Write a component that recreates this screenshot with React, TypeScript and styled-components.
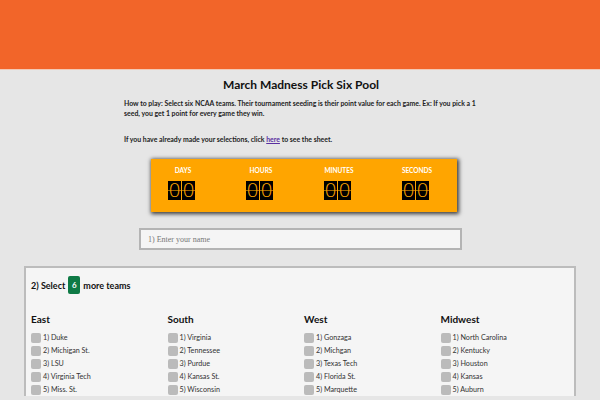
import styled, { createGlobalStyle } from "styled-components";

const GlobalStyle = createGlobalStyle`
  body {
    margin: 0;
    background-color: #e6e6e6;
    font-family: "Lato", "Liberation Sans", sans-serif;
    color: #111;
  }
`;

const Header = styled.div`
  height: 69px;
  background-color: #f26529;
  border-bottom: 1px solid #f3c9b4;
`;

const Content = styled.div`
  width: 354px;
  margin: 0 auto;
  padding-left: 2px;
`;

const Title = styled.h1`
  margin: 5px 0 0;
  font-size: 12px;
  text-align: center;
  line-height: 20px;
`;

const Intro = styled.p<{ $top: number }>`
  margin: ${(p) => p.$top}px 0 0;
  font-size: 6.9px;
  font-weight: bold;
  line-height: 10px;
  color: #222;
  a {
    color: #5a2fa0;
  }
`;

const Countdown = styled.div`
  width: 306px;
  height: 53px;
  margin: 15px 0 0 27px;
  background-color: #ffa500;
  box-shadow: 1px 1px 4px 1px rgba(0, 0, 0, 0.75);
  display: flex;
  justify-content: center;
  padding-right: 8px;
  box-sizing: border-box;
`;

const Unit = styled.div`
  flex: none;
  width: 78px;
  display: flex;
  flex-direction: column;
  align-items: center;
  padding-top: 8px;
`;

const UnitLabel = styled.div`
  font-size: 6.5px;
  font-weight: bold;
  color: #fff;
  line-height: 8px;
`;

const Digits = styled.div`
  display: flex;
  gap: 1px;
  margin-top: 6px;
  margin-right: 3px;
`;

const Digit = styled.span`
  position: relative;
  width: 13px;
  height: 19px;
  background-color: #000;
  color: #ffa500;
  font-size: 20px;
  line-height: 19px;
  text-align: center;
  font-family: "DejaVu Sans", sans-serif;
  font-weight: 300;
  &::after {
    content: "";
    position: absolute;
    left: -1px;
    right: -1px;
    top: 9px;
    height: 1px;
    background-color: rgba(255, 165, 0, 0.6);
  }
`;

const NameInput = styled.input`
  display: block;
  width: 323px;
  height: 22px;
  margin: 16px 0 0 15px;
  box-sizing: border-box;
  background-color: #f5f5f5;
  border: 2px solid #b4b4b4;
  padding: 0 0 0 7px;
  font-family: "Liberation Serif", serif;
  font-size: 8px;
  outline: none;
  &::placeholder {
    color: #777;
  }
`;

const Panel = styled.div`
  width: 552px;
  margin: 16px auto 0;
  box-sizing: border-box;
  background-color: #f5f5f5;
  border: 2px solid #bcbcbc;
  border-bottom: none;
  padding: 7px 5px 0;
`;

const SelectLine = styled.div`
  display: flex;
  align-items: center;
  gap: 3px;
  font-size: 9px;
  font-weight: bold;
  height: 20px;
`;

const Badge = styled.span`
  display: inline-flex;
  align-items: center;
  justify-content: center;
  width: 12px;
  height: 18px;
  border-radius: 2px;
  background-color: #0e7a45;
  color: #fff;
  font-size: 8px;
`;

const Regions = styled.div`
  display: grid;
  grid-template-columns: repeat(4, 136.5px);
  margin-top: 17px;
`;

const RegionTitle = styled.h2`
  margin: 0 0 5px;
  font-size: 10px;
  line-height: 14px;
`;

const Team = styled.label`
  display: flex;
  align-items: center;
  gap: 2px;
  height: 13px;
  font-size: 7.2px;
  color: #333;
`;

const Box = styled.span`
  width: 10px;
  height: 10px;
  border-radius: 2px;
  background-color: #bbb;
`;

const regions = [
  { name: "East", teams: ["Duke", "Michigan St.", "LSU", "Virginia Tech", "Miss. St."] },
  { name: "South", teams: ["Virginia", "Tennessee", "Purdue", "Kansas St.", "Wisconsin"] },
  { name: "West", teams: ["Gonzaga", "Michgan", "Texas Tech", "Florida St.", "Marquette"] },
  { name: "Midwest", teams: ["North Carolina", "Kentucky", "Houston", "Kansas", "Auburn"] },
];

const units = ["DAYS", "HOURS", "MINUTES", "SECONDS"];

export default function App() {
  return (
    <>
      <GlobalStyle />
      <Header />
      <Content>
        <Title>March Madness Pick Six Pool</Title>
        <Intro $top={3}>
          How to play: Select six NCAA teams. Their tournament seeding is their
          point value for each game. Ex: If you pick a 1 seed, you get 1 point
          for every game they win.
        </Intro>
        <Intro $top={16}>
          If you have already made your selections, click <a href="#">here</a>{" "}
          to see the sheet.
        </Intro>
        <Countdown>
          {units.map((u) => (
            <Unit key={u}>
              <UnitLabel>{u}</UnitLabel>
              <Digits>
                <Digit>0</Digit>
                <Digit>0</Digit>
              </Digits>
            </Unit>
          ))}
        </Countdown>
        <NameInput placeholder="1) Enter your name" />
      </Content>
      <Panel>
        <SelectLine>
          2) Select <Badge>6</Badge> more teams
        </SelectLine>
        <Regions>
          {regions.map((r) => (
            <div key={r.name}>
              <RegionTitle>{r.name}</RegionTitle>
              {r.teams.map((t, i) => (
                <Team key={t}>
                  <Box />
                  {i + 1}) {t}
                </Team>
              ))}
            </div>
          ))}
        </Regions>
      </Panel>
    </>
  );
}
